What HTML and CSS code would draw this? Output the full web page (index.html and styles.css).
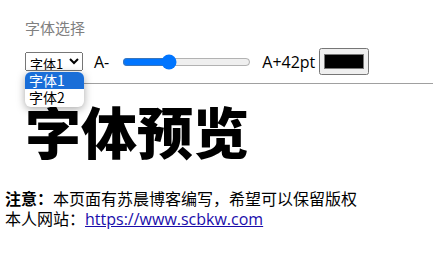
FILE: index.html
```html
<!DOCTYPE html>
<html lang="zh-CN">
<head>
<meta charset="utf-8">
<title>字体预览</title>
<link rel="stylesheet" href="styles.css">
</head>
<body>
<div class="panel">
  <div class="panel-title">字体选择</div>
  <div class="controls">
    <div class="select-wrap">
      <select class="font-select">
        <option>字体1</option>
        <option>字体2</option>
      </select>
      <ul class="dropdown">
        <li class="opt opt-active">字体1</li>
        <li class="opt">字体2</li>
      </ul>
    </div>
    <span class="size-label minus">A-</span>
    <input class="size-range" type="range" min="12" max="100" value="42">
    <span class="size-label plus">A+42pt</span>
    <input class="color-pick" type="color" value="#000000">
  </div>
</div>
<h1 class="preview">字体预览</h1>
<div class="notice">
  <div><b>注意：</b>本页面有苏晨博客编写，希望可以保留版权</div>
  <div>本人网站：<a href="#">https://www.scbkw.com</a></div>
</div>
</body>
</html>
```

FILE: styles.css
```css
body {
  margin: 0;
  font-family: "Open Sans", "Noto Sans CJK SC", sans-serif;
  color: #000;
  background: #fff;
  overflow: hidden;
}
.panel {
  margin-left: 25px;
  padding-top: 18px;
  padding-bottom: 8px;
  border-bottom: 1px solid #a0a0a0;
}
.panel-title {
  font-family: "Noto Sans CJK SC", sans-serif;
  font-size: 15px;
  line-height: 20px;
  color: #808080;
  margin-bottom: 10px;
}
.controls {
  display: flex;
  align-items: center;
  height: 27px;
}
.select-wrap {
  position: relative;
  display: flex;
}
.font-select {
  font-family: "Noto Sans CJK SC", sans-serif;
  font-size: 13px;
  width: 58px;
  height: 19px;
  padding: 0;
  margin: 0;
}
.dropdown {
  position: absolute;
  left: 0;
  top: 20px;
  width: 59px;
  margin: 0;
  padding: 0;
  list-style: none;
  background: #fff;
  border-radius: 6px;
  box-shadow: 0 2px 8px rgba(0, 0, 0, 0.35);
  font-family: "Noto Sans CJK SC", sans-serif;
  font-size: 14px;
  z-index: 2;
}
.opt {
  height: 17px;
  line-height: 17px;
  padding-left: 4px;
}
.opt + .opt {
  height: 18px;
}
.opt-active {
  background: #1a6ed8;
  color: #fff;
  border-radius: 6px 6px 0 0;
}
.size-label {
  font-size: 16px;
}
.minus {
  margin-left: 11px;
}
.size-range {
  width: 129px;
  margin: 0 11px 0 13px;
}
.plus {
  margin-right: 4px;
}
.color-pick {
  width: 50px;
  height: 27px;
  margin: 0;
}
.preview {
  font-family: "Noto Sans CJK SC", sans-serif;
  font-size: 56px;
  font-weight: 900;
  line-height: 70px;
  margin: 11px 0 0 25px;
}
.notice {
  font-family: "Noto Sans CJK SC", sans-serif;
  font-size: 16px;
  line-height: 20px;
  margin: 23px 0 0 5px;
}
.notice a {
  color: #1a0dab;
  font-family: "Open Sans", sans-serif;
  font-size: 16px;
}
```
